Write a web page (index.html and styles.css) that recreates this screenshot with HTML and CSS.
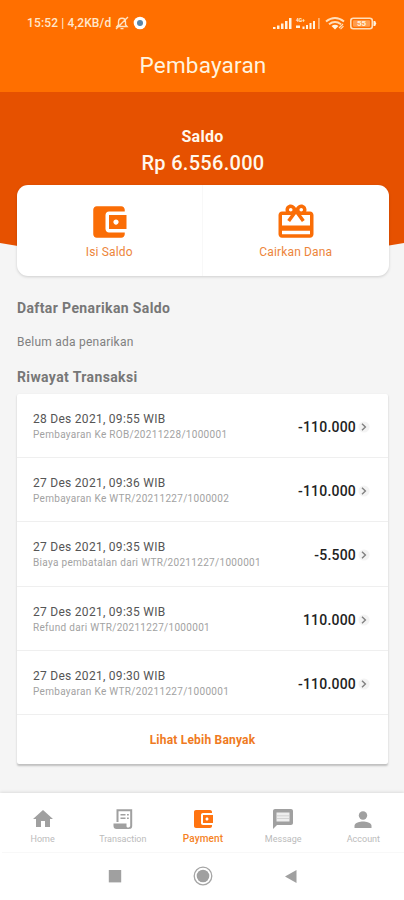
FILE: index.html
```html
<!DOCTYPE html>
<html lang="id">
<head>
<meta charset="utf-8">
<title>Pembayaran</title>
<link rel="stylesheet" href="styles.css">
</head>
<body>
<svg width="0" height="0" class="defs">
  <symbol id="wallet" viewBox="0 0 24 24"><path d="M21 18v1c0 1.100-.9 2-2 2H5c-1.110 0-2-.9-2-2V5c0-1.100.890-2 2-2h14c1.100 0 2 .9 2 2v1h-9c-1.110 0-2 .9-2 2v8c0 1.100.890 2 2 2h9zm-9-2h10V8H12v8zm4-2.500c-.830 0-1.500-.670-1.500-1.500s.670-1.500 1.500-1.500 1.500.670 1.500 1.500-.670 1.500-1.500 1.500z"/></symbol>
  <symbol id="gift" viewBox="0 0 24 24"><path d="M20 6h-2.180c.110-.310.180-.650.180-1 0-1.660-1.340-3-3-3-1.050 0-1.960.540-2.500 1.350l-.5.670-.5-.680C10.960 2.540 10.050 2 9 2 7.340 2 6 3.340 6 5c0 .350.070.690.180 1H4c-1.110 0-1.990.890-1.990 2L2 19c0 1.110.890 2 2 2h16c1.110 0 2-.890 2-2V8c0-1.110-.890-2-2-2zm-5-2c.550 0 1 .450 1 1s-.450 1-1 1-1-.450-1-1 .450-1 1-1zM9 4c.550 0 1 .450 1 1s-.450 1-1 1-1-.450-1-1 .450-1 1-1zm11 15H4v-2h16v2zm0-5H4V8h5.080L7 10.830 8.620 12 11 8.760l1-1.360 1 1.360L15.380 12 17 10.830 14.920 8H20v6z"/></symbol>
  <symbol id="chevron" viewBox="0 0 12 12"><circle cx="6" cy="6" r="5.600" fill="#f3f3f3"/><path d="M4 2.800 7.400 6 4 9.200" fill="none" stroke="#808080" stroke-width="1.400"/></symbol>
</svg>

<header class="topbar">
  <div class="status">
    <span class="clock">15:52 | 4,2KB/d</span>
    <svg class="bell" viewBox="0 0 14 14"><path d="M2 10.500h10L10.500 8.800V6c0-5-7-5-7 0v2.800zM5.500 12.600h3M1 13 13 1" fill="none" stroke="#ffe3c2" stroke-width="1.400"/></svg>
    <svg class="dot" viewBox="0 0 14 14"><circle cx="7" cy="7" r="6.300" fill="#fff"/><circle cx="7" cy="7" r="3" fill="#5b86a8"/></svg>
    <svg class="signals" viewBox="0 0 104 14" fill="#ffdfba">
      <path d="M0 11h2.500v2H0zM4 9.500h2.500V13H4zM8 7.500h2.500V13H8zM12 5h2.500v8H12zM16 2h2.500v11H16z"/>
      <path d="M23 9.500h4V12h-4zM29.500 10.500h2V13h-2zM33 9h2v4h-2zM36.500 7h2v6h-2zM40 5h2v8h-2z"/><path d="M45 2h1.800v11H45z" opacity=".5"/>
      <text x="23" y="6" class="net">4G+</text>
      <path d="M53 5.500q9-7 18 0M56 8.200q6-4.500 12 0" fill="none" stroke="#ffdfba" stroke-width="2"/><path d="M58.500 10q3.500-2.500 7 0L62 13.500z"/><path d="m66 12 4-4M67.500 13.200l3-3" stroke="#ffdfba" stroke-width="1.200"/>
      <rect x="77.800" y="2.300" width="21.500" height="10.500" rx="2.500" fill="none" stroke="#ffdfba" stroke-width="1.600"/><rect x="80" y="4.300" width="17" height="6.500" rx="1" opacity=".35"/><path d="M100.500 5h1.700l1 2.500-1 2.500h-1.700z"/>
      <text x="84" y="10.300" class="charge">55</text>
    </svg>
  </div>
  <h1>Pembayaran</h1>
</header>

<section class="hero">
  <svg class="arc" viewBox="0 0 404 170" preserveAspectRatio="none"><path d="M0 0h404v151Q202 187 0 151z" fill="#e65100"/></svg>
  <div class="balance-label">Saldo</div>
  <div class="balance">Rp 6.556.000</div>
  <div class="actions">
    <div class="action"><svg><use href="#wallet"/></svg><span>Isi Saldo</span></div>
    <div class="action"><svg><use href="#gift"/></svg><span>Cairkan Dana</span></div>
  </div>
</section>

<main>
  <h2>Daftar Penarikan Saldo</h2>
  <p class="empty">Belum ada penarikan</p>
  <h2>Riwayat Transaksi</h2>
  <div class="list">
    <div class="row"><div><div class="date">28 Des 2021, 09:55 WIB</div><div class="desc">Pembayaran Ke ROB/20211228/1000001</div></div><span class="amount">-110.000</span><svg class="chev"><use href="#chevron"/></svg></div>
    <div class="row"><div><div class="date">27 Des 2021, 09:36 WIB</div><div class="desc">Pembayaran Ke WTR/20211227/1000002</div></div><span class="amount">-110.000</span><svg class="chev"><use href="#chevron"/></svg></div>
    <div class="row"><div><div class="date">27 Des 2021, 09:35 WIB</div><div class="desc">Biaya pembatalan dari WTR/20211227/1000001</div></div><span class="amount">-5.500</span><svg class="chev"><use href="#chevron"/></svg></div>
    <div class="row"><div><div class="date">27 Des 2021, 09:35 WIB</div><div class="desc">Refund dari WTR/20211227/1000001</div></div><span class="amount">110.000</span><svg class="chev"><use href="#chevron"/></svg></div>
    <div class="row"><div><div class="date">27 Des 2021, 09:30 WIB</div><div class="desc">Pembayaran Ke WTR/20211227/1000001</div></div><span class="amount">-110.000</span><svg class="chev"><use href="#chevron"/></svg></div>
    <div class="more">Lihat Lebih Banyak</div>
  </div>
</main>

<footer>
  <nav>
    <div class="tab"><svg viewBox="0 0 24 24"><path d="M10 20v-6h4v6h5v-8h3L12 3 2 12h3v8z"/></svg><span>Home</span></div>
    <div class="tab"><svg viewBox="0 0 24 24"><path d="M6.500 15V3.300h13.700V19c0 1.200-.8 2-2 2" fill="none" stroke="currentColor" stroke-width="2"/><path d="M2.500 16.500h13V19c0 1 .7 1.500 1.500 1.500h2.500c-.5.900-1.300 1.500-2.500 1.500H5.500c-1.800 0-3-1.200-3-3z"/><path d="M9.500 7h5v1.600h-5zM16 7h1.800v1.600H16zM9.500 10.500h5v1.600h-5zM16 10.500h1.800v1.600H16z"/></svg><span>Transaction</span></div>
    <div class="tab active"><svg><use href="#wallet"/></svg><span>Payment</span></div>
    <div class="tab"><svg viewBox="0 0 24 24"><path d="M4 2h16c1.100 0 2 .9 2 2v12c0 1.100-.9 2-2 2H6l-4 4V4c0-1.100.9-2 2-2z"/><path d="M5.500 5.500h13v9h-13z" fill="#eee"/><path d="M6 8.800h12M6 11.500h12" stroke="#ccc" stroke-width=".8"/></svg><span>Message</span></div>
    <div class="tab"><svg viewBox="0 0 24 24"><circle cx="12" cy="8.500" r="4.200"/><path d="M3.500 21v-2.200c0-3 5.700-4.300 8.500-4.300s8.500 1.300 8.500 4.300V21z"/></svg><span>Account</span></div>
  </nav>
  <div class="system">
    <svg viewBox="0 0 20 20"><path d="M3.800 4h12.400v12.400H3.800z"/></svg>
    <svg viewBox="0 0 20 20"><circle cx="10" cy="10" r="8.800" fill="none" stroke="#a5a5a5" stroke-width="1.300"/><circle cx="10" cy="10" r="6.300"/></svg>
    <svg viewBox="0 0 20 20"><path d="M4 10.500 15.500 4v13z"/></svg>
  </div>
</footer>
</body>
</html>
```
FILE: styles.css
```css
* { box-sizing: border-box; }
body { margin: 0; width: 404px; height: 900px; display: flex; flex-direction: column; background: #f5f5f5; font-family: Roboto, sans-serif; overflow: hidden; }
svg { display: block; fill: currentColor; }
.defs { display: none; }
h1, h2, p { margin: 0; }
.topbar { height: 92px; flex: none; background: #ff6f00; color: #fff3df; }
.status { display: flex; align-items: center; height: 30px; padding: 16px 0 0 27px; }
.clock { font-size: 12px; font-weight: 500; line-height: 14px; width: 88px; white-space: nowrap; color: #ffe7cd; letter-spacing: 0.13px; }
.bell { width: 14px; height: 14px; }
.dot { width: 14px; height: 14px; margin-left: 4px; }
.signals { width: 104px; height: 14px; margin-left: 126px; }
.net { font-size: 5px; font-weight: 700; }
.charge { font-size: 8px; font-weight: 700; }
h1 { font-size: 22.5px; font-weight: 400; line-height: 30px; margin-top: 20px; padding-left: 2px; text-align: center; letter-spacing: 0.2px; }
.hero { position: relative; height: 184px; flex: none; color: #fff8ec; text-align: center; padding: 35px 15.5px 0 16.5px; }
.arc { position: absolute; left: 0; top: 0; width: 404px; height: 170px; }
.balance-label { position: relative; font-size: 16px; font-weight: 700; line-height: 20px; letter-spacing: 0.3px; }
.balance { position: relative; font-size: 20px; font-weight: 500; line-height: 28px; margin-top: 2px; padding-left: 1px; letter-spacing: 0.3px; }
.actions { position: relative; display: flex; height: 91px; margin-top: 8px; border-radius: 11px; background: #fff; box-shadow: 0 1px 3px rgba(0,0,0,.16); color: #fa6d06; }
.action { flex: 1; display: flex; flex-direction: column; align-items: center; padding-top: 16px; }
.action + .action { border-left: 1px solid #f8f8f8; }
.action svg { width: 42px; height: 42px; }
.action span { font-size: 12px; line-height: 16px; margin-top: 1px; color: #ed853b; letter-spacing: 0.15px; }
main { height: 517px; flex: none; padding: 22px 16px 0; color: #777; }
h2 { font-size: 14px; line-height: 20px; font-weight: 700; padding-left: 1px; letter-spacing: 0.38px; }
.empty { font-size: 12px; line-height: 16px; margin: 16px 0 17px 1px; color: #808080; letter-spacing: .23px; }
.list { margin: 7px 0 0 1px; background: #fff; border-radius: 2px; box-shadow: 0 1.5px 2px rgba(0,0,0,.22); }
.row { display: flex; align-items: center; height: 64.2px; padding: 3px 18px 0 16px; border-bottom: 1.500px solid #efefef; }
.date { font-size: 12px; line-height: 15px; color: #555; letter-spacing: .28px; white-space: nowrap; }
.desc { font-size: 10px; line-height: 15px; color: #a2a2a2; letter-spacing: .31px; white-space: nowrap; }
.amount { margin-left: auto; font-size: 14px; font-weight: 500; color: #222; letter-spacing: .2px; }
.chev { width: 12px; height: 12px; margin-left: 2px; }
.more { height: 49px; line-height: 51px; text-align: center; color: #ef7a22; font-size: 12px; font-weight: 700; letter-spacing: .2px; }
footer { height: 107px; flex: none; background: #fff; box-shadow: 0 -1px 3px rgba(0,0,0,.1); }
nav { height: 60px; display: grid; grid-template-columns: repeat(5, 80.2px); justify-content: center; padding-top: 14px; border-bottom: 1px solid #f8f8f8; margin: 0 0 0 2px; }
.tab { display: flex; flex-direction: column; align-items: center; color: #a0a0a0; }
.tab svg { width: 24px; height: 24px; }
.tab span { font-size: 9px; line-height: 12px; margin-top: 2px; color: #bbb; }
.tab.active { color: #ff7411; }
.tab.active span { color: #f5821f; font-size: 10px; font-weight: 500; letter-spacing: .15px; }
.system { display: flex; justify-content: center; gap: 68px; padding: 13px 0 0 1px; color: #a0a0a0; }
.system svg { width: 20px; height: 20px; }
```
